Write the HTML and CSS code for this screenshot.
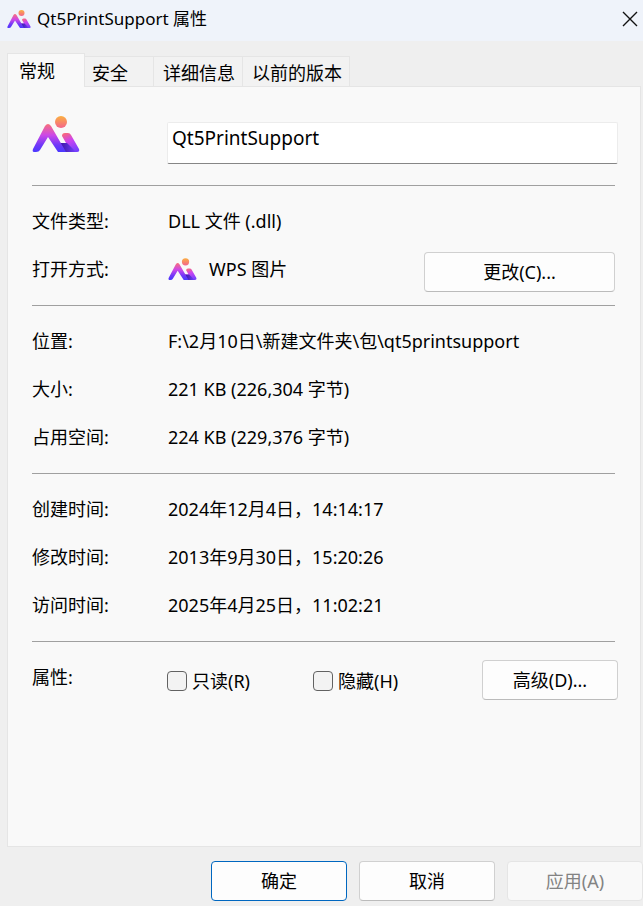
FILE: index.html
```
<!DOCTYPE html>
<html lang="zh-CN">
<head>
    <meta charset="UTF-8">
    <meta name="viewport" content="width=device-width, initial-scale=1.0">
    <title>Qt5PrintSupport 属性</title>
    <link rel="stylesheet" href="styles.css">
</head>
<body>
    <!-- 公用图标 -->
    <svg class="defs" width="0" height="0" aria-hidden="true">
        <defs>
            <linearGradient id="peak" gradientUnits="userSpaceOnUse" x1="0" y1="8" x2="0" y2="36">
                <stop offset="0" stop-color="#f8717a"/>
                <stop offset="0.4" stop-color="#cc48e8"/>
                <stop offset="0.75" stop-color="#7038f8"/>
                <stop offset="1" stop-color="#4a38ff"/>
            </linearGradient>
            <linearGradient id="slope" gradientUnits="userSpaceOnUse" x1="34" y1="17" x2="42" y2="36">
                <stop offset="0" stop-color="#f8687c"/>
                <stop offset="0.4" stop-color="#cc44f0"/>
                <stop offset="1" stop-color="#7440ff"/>
            </linearGradient>
            <linearGradient id="fold" x1="0" y1="0" x2="1" y2="0">
                <stop offset="0" stop-color="#35149c"/>
                <stop offset="1" stop-color="#7440ff"/>
            </linearGradient>
            <linearGradient id="sun" x1="0" y1="0" x2="0" y2="1">
                <stop offset="0" stop-color="#fbb040"/>
                <stop offset="1" stop-color="#f4648c"/>
            </linearGradient>
            <symbol id="logo" viewBox="0 0 48 36">
                <path fill="url(#slope)" d="M30 20Q30 17 33 17H36Q38 17 39 19L47 33Q48 36 45 36H34L28 27H34Z"/>
                <path fill="url(#fold)" d="M27 27H35L44 36H31Z"/>
                <path fill="url(#peak)" d="M13 10Q16 6 19 10L34 36H26L16 21L8 34Q7 36 4 36H2Q0 36 1 33Z"/>
                <circle fill="url(#sun)" cx="29" cy="6" r="6"/>
            </symbol>
        </defs>
    </svg>

    <header class="titlebar">
        <svg class="title-icon"><use href="#logo"/></svg>
        <h1>Qt5PrintSupport 属性</h1>
        <button class="close" type="button" aria-label="关闭">
            <svg width="16" height="16" viewBox="0 0 16 16"><path d="M1 1L15 15M15 1L1 15" stroke="#111" stroke-width="1.4"/></svg>
        </button>
    </header>

    <!-- 选项卡 -->
    <div class="tabs" role="tablist">
        <button class="tab active" type="button" role="tab" aria-selected="true">常规</button>
        <button class="tab wide" type="button" role="tab">安全</button>
        <button class="tab" type="button" role="tab">详细信息</button>
        <button class="tab" type="button" role="tab">以前的版本</button>
    </div>

    <main class="panel">
        <div class="row file-row">
            <div class="label"><svg class="file-icon"><use href="#logo"/></svg></div>
            <input class="filename" type="text" aria-label="文件名" value="Qt5PrintSupport">
        </div>
        <hr>
        <div class="section">
            <div class="row"><div class="label">文件类型:</div><div>DLL 文件 (.dll)</div></div>
            <div class="row">
                <div class="label">打开方式:</div>
                <svg class="app-icon"><use href="#logo"/></svg>
                <div>WPS 图片</div>
                <button class="btn change" type="button">更改(C)...</button>
            </div>
        </div>
        <hr>
        <div class="section">
            <div class="row"><div class="label">位置:</div><div>F:\2月10日\新建文件夹\包\qt5printsupport</div></div>
            <div class="row"><div class="label">大小:</div><div>221 KB (226,304 字节)</div></div>
            <div class="row"><div class="label">占用空间:</div><div>224 KB (229,376 字节)</div></div>
        </div>
        <hr>
        <div class="section">
            <div class="row"><div class="label">创建时间:</div><div>2024年12月4日，14:14:17</div></div>
            <div class="row"><div class="label">修改时间:</div><div>2013年9月30日，15:20:26</div></div>
            <div class="row"><div class="label">访问时间:</div><div>2025年4月25日，11:02:21</div></div>
        </div>
        <hr>
        <div class="section">
            <div class="row">
                <div class="label">属性:</div>
                <label class="check"><input type="checkbox">只读(R)</label>
                <label class="check"><input type="checkbox">隐藏(H)</label>
                <button class="btn advanced" type="button">高级(D)...</button>
            </div>
        </div>
    </main>

    <footer class="actions">
        <button class="btn primary" type="button">确定</button>
        <button class="btn" type="button">取消</button>
        <button class="btn" type="button" disabled>应用(A)</button>
    </footer>
</body>
</html>
```

FILE: styles.css
```
* {
    box-sizing: border-box;
}
body {
    margin: 0;
    min-height: 100vh;
    display: flex;
    flex-direction: column;
    background-color: #efefef;
    color: #000;
    font-family: "Noto Sans", "Noto Sans CJK SC", sans-serif;
    font-size: 18px;
    line-height: 24px;
}
button, input {
    font: inherit;
    color: inherit;
}
.defs {
    position: absolute;
}
.titlebar {
    display: flex;
    align-items: center;
    height: 41px;
    padding: 0 5px 4px 7px;
    background-color: #eff3fa;
}
.titlebar h1 {
    margin: 0;
    flex: 1;
    font-size: 17px;
    font-weight: normal;
}
.title-icon {
    width: 24px;
    height: 18px;
    margin-right: 6px;
}
.close {
    display: flex;
    padding: 0;
    border: none;
    background: none;
}
/* 选项卡 */
.tabs {
    display: flex;
    align-items: flex-end;
    margin: 12px 2px 0 7px;
}
.tab {
    height: 31px;
    padding: 2px 7px 0 9px;
    border: 1px solid #e5e5e5;
    border-left: none;
    background-color: #f2f2f2;
    white-space: nowrap;
}
.tab.wide {
    padding: 2px 25px 0 7px;
}
.tab.active {
    position: relative;
    height: 34px;
    padding: 0 29px 0 11px;
    border-left: 1px solid #e5e5e5;
    border-bottom: none;
    background-color: #f9f9f9;
}
.panel {
    flex: 1;
    margin: -1px 2px 0 7px;
    padding: 0 22px 0 24px;
    border: 1px solid #e5e5e5;
    background-color: #f9f9f9;
}
.panel hr {
    height: 1px;
    margin: 0 3px 0 0;
    border: none;
    background-color: #a0a0a0;
}
.section {
    padding: 11px 0 12px;
}
.row {
    display: flex;
    align-items: center;
    height: 48px;
}
.label {
    flex: none;
    width: 136px;
}
.file-row {
    height: 98px;
    padding-top: 14px;
}
.file-icon {
    display: block;
    width: 48px;
    height: 36px;
    margin-bottom: 18px;
}
.filename {
    flex: 1;
    min-width: 0;
    height: 42px;
    margin-left: -1px;
    padding: 0 4px 10px;
    border: 1px solid #ececec;
    border-bottom-color: #868686;
    border-radius: 2px;
    background-color: #fff;
    font-size: 19px;
}
.app-icon {
    width: 29px;
    height: 22px;
    margin-right: 12px;
}
.btn {
    width: 136px;
    height: 40px;
    padding: 0;
    border: 1px solid #d0d0d0;
    border-bottom-color: #bbb;
    border-radius: 4px;
    background-color: #fdfdfd;
}
.change {
    width: 191px;
    margin: 6px 3px 0 auto;
}
.advanced {
    margin: 6px 0 0 auto;
}
.check {
    display: flex;
    align-items: center;
    width: 146px;
    padding-top: 8px;
}
.check input {
    appearance: none;
    width: 20px;
    height: 20px;
    margin: 0 5px 0 -1px;
    border: 1px solid #626262;
    border-radius: 4px;
    background-color: #f3f3f3;
}
.actions {
    display: flex;
    justify-content: flex-end;
    gap: 12px;
    padding: 14px 0 5px;
}
.primary {
    border-color: #0067c0;
}
.btn:disabled {
    border-color: #e5e5e5;
    background-color: #f9f9f9;
    color: #838383;
}
```
